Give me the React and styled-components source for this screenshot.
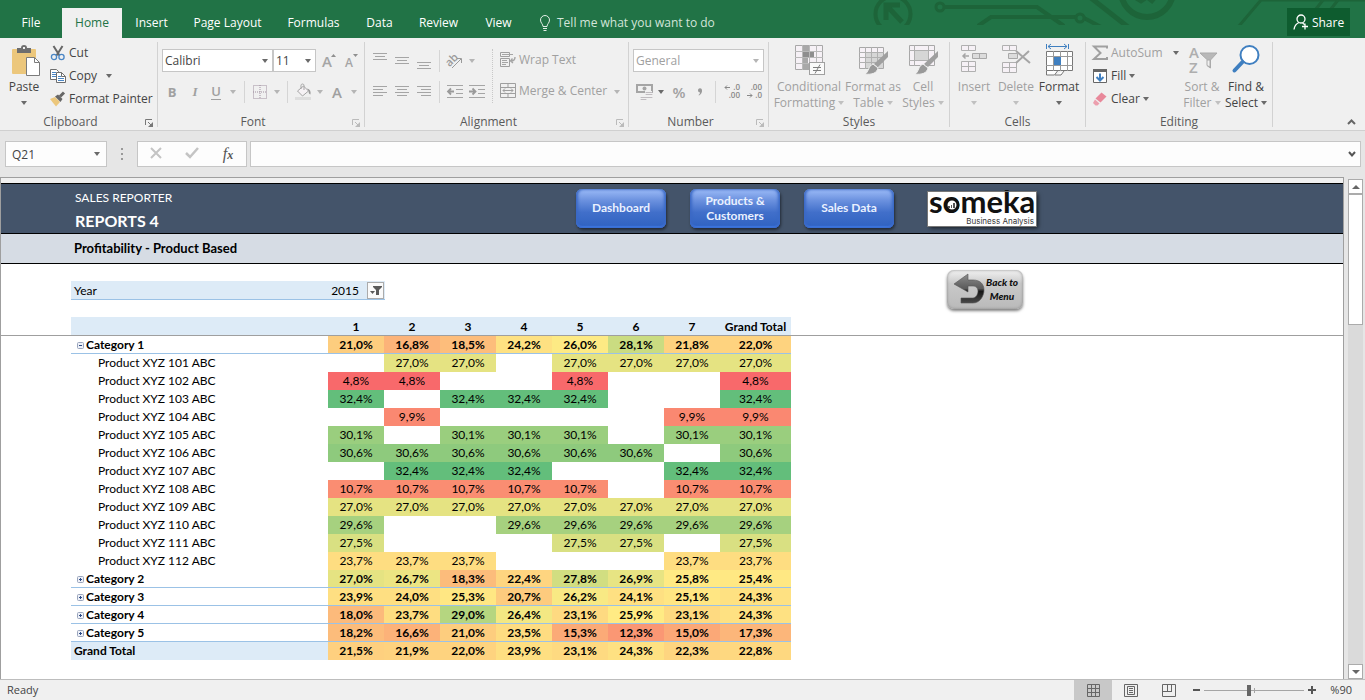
import React from "react";
import { useState } from "react";
import styled, { createGlobalStyle } from "styled-components";

const GlobalStyle = createGlobalStyle`
    *{
        box-sizing: border-box;
    }
    body{
        margin: 0;
        background: #f0f0f0;
        font-family: "Open Sans", "Noto Sans", sans-serif;
        font-size: 12px;
        color: #444;
    }
    button, input, select{
        font-family: inherit;
        font-size: inherit;
        color: inherit;
        margin: 0;
        padding: 0;
        border: none;
        background: none;
        border-radius: 0;
    }
    svg{
        overflow: visible;
    }
`;

/* ---------- data ---------- */

const tabs = [
    { name: 'File', width: 62 },
    { name: 'Home', width: 60, active: true },
    { name: 'Insert', width: 59 },
    { name: 'Page Layout', width: 93 },
    { name: 'Formulas', width: 79 },
    { name: 'Data', width: 53 },
    { name: 'Review', width: 65 },
    { name: 'View', width: 55 },
];

const columns = ['1', '2', '3', '4', '5', '6', '7', 'Grand Total'];

const rows = [
    { name: 'Category 1', type: 'category', open: true, values: ['21,0', '16,8', '18,5', '24,2', '26,0', '28,1', '21,8', '22,0'] },
    { name: 'Product XYZ 101 ABC', values: ['', '27,0', '27,0', '', '27,0', '27,0', '27,0', '27,0'] },
    { name: 'Product XYZ 102 ABC', values: ['4,8', '4,8', '', '', '4,8', '', '', '4,8'] },
    { name: 'Product XYZ 103 ABC', values: ['32,4', '', '32,4', '32,4', '32,4', '', '', '32,4'] },
    { name: 'Product XYZ 104 ABC', values: ['', '9,9', '', '', '', '', '9,9', '9,9'] },
    { name: 'Product XYZ 105 ABC', values: ['30,1', '', '30,1', '30,1', '30,1', '', '30,1', '30,1'] },
    { name: 'Product XYZ 106 ABC', values: ['30,6', '30,6', '30,6', '30,6', '30,6', '30,6', '', '30,6'] },
    { name: 'Product XYZ 107 ABC', values: ['', '32,4', '32,4', '32,4', '', '', '32,4', '32,4'] },
    { name: 'Product XYZ 108 ABC', values: ['10,7', '10,7', '10,7', '10,7', '10,7', '', '10,7', '10,7'] },
    { name: 'Product XYZ 109 ABC', values: ['27,0', '27,0', '27,0', '27,0', '27,0', '27,0', '27,0', '27,0'] },
    { name: 'Product XYZ 110 ABC', values: ['29,6', '', '', '29,6', '29,6', '29,6', '29,6', '29,6'] },
    { name: 'Product XYZ 111 ABC', values: ['27,5', '', '', '', '27,5', '27,5', '', '27,5'] },
    { name: 'Product XYZ 112 ABC', values: ['23,7', '23,7', '23,7', '', '', '', '23,7', '23,7'] },
    { name: 'Category 2', type: 'category', values: ['27,0', '26,7', '18,3', '22,4', '27,8', '26,9', '25,8', '25,4'] },
    { name: 'Category 3', type: 'category', values: ['23,9', '24,0', '25,3', '20,7', '26,2', '24,1', '25,1', '24,3'] },
    { name: 'Category 4', type: 'category', values: ['18,0', '23,7', '29,0', '26,4', '23,1', '25,9', '23,1', '24,3'] },
    { name: 'Category 5', type: 'category', values: ['18,2', '16,6', '21,0', '23,5', '15,3', '12,3', '15,0', '17,3'] },
    { name: 'Grand Total', type: 'total', values: ['21,5', '21,9', '22,0', '23,9', '23,1', '24,3', '22,3', '22,8'] },
];

// red - yellow - green scale, like the conditional formatting one
const red = [248, 105, 107];
const yellow = [255, 235, 132];
const green = [99, 190, 123];
const mix = (a, b, t) => `rgb(${a.map((c, i) => Math.round(c + (b[i] - c) * t)).join(',')})`;
const heat = (text) => {
    if (!text) return 'transparent';
    const v = parseFloat(text.replace(',', '.'));
    const mid = 25.9;
    return v <= mid ? mix(red, yellow, (v - 4.8) / (mid - 4.8)) : mix(yellow, green, (v - mid) / (32.4 - mid));
};

/* ---------- icons ---------- */

const Icon = ({ w = 16, h = 16, children }) => (
    <svg width={w} height={h} viewBox={`0 0 ${w} ${h}`} fill="none" aria-hidden="true">{children}</svg>
);

const Caret = ({ color = '#6a6a6a' }) => (
    <Icon w={6} h={4}><path d="M0 0h6L3 4z" fill={color} /></Icon>
);

const Lines = ({ bars, w = 16, h = 16 }) => (
    <Icon w={w} h={h}>
        {bars.map(([x, y, len]) => <rect key={`${x}-${y}`} x={x} y={y} width={len} height="1" fill="#a5a5a5" />)}
    </Icon>
);

const PasteIcon = () => (
    <Icon w={34} h={32}>
        <g transform="translate(4 0)">
            <rect x="1" y="5" width="24" height="25" rx="1" fill="#ecc77c" />
            <path d="M6 9V4h4c0-2 1-3 3-3s3 1 3 3h4v5z" fill="#6e6e6e" />
            <rect x="12" y="3" width="2" height="2" fill="#f0f0f0" />
            <path d="M15.500 13.500h8l5 5v13h-13z" fill="#fff" stroke="#7b7b7b" />
            <path d="M23.500 13.500v5h5" stroke="#7b7b7b" />
        </g>
    </Icon>
);

const CutIcon = () => (
    <Icon>
        <path d="M3.500 1l6 9.500M12.500 1l-6 9.500" stroke="#666" strokeWidth="2" />
        <circle cx="4" cy="12" r="2.600" stroke="#4a86c5" strokeWidth="1.300" />
        <circle cx="11.500" cy="12" r="2.600" stroke="#4a86c5" strokeWidth="1.300" />
    </Icon>
);

const CopyIcon = () => (
    <Icon>
        <path d="M.5 1.500h6l2 2v8h-8z" fill="#fff" stroke="#6e6e6e" />
        <path d="M2 4.500h4M2 6.500h4M2 8.500h4" stroke="#4a86c5" />
        <path d="M6.500 4.500h5l4 4v6h-9z" fill="#fff" stroke="#6e6e6e" />
        <path d="M11.500 4.500v4h4" stroke="#6e6e6e" />
        <path d="M8 8.500h3M8 10.500h6M8 12.500h6" stroke="#4a86c5" />
    </Icon>
);

const PainterIcon = () => (
    <Icon>
        <path d="M0 8l5-2 5 5-4 4.500z" fill="#ecc77c" />
        <path d="M5 5.500l3-2 4.500 4.500-2 3z" fill="#666" />
        <path d="M10 5.500l4-4" stroke="#666" strokeWidth="3" />
    </Icon>
);

const GrowIcon = ({ down }) => (
    <Icon w={16} h={20}>
        <text x="2" y="16" fontSize={down ? 12 : 15} fontWeight="600" fill="#a5a5a5">A</text>
        <path d={down ? 'M10 3h5l-2.500 3z' : 'M11 6h5l-2.500-3z'} fill="#8f8f8f" />
    </Icon>
);

const BordersIcon = () => (
    <Icon w={14} h={14}>
        <path d="M.5.5h13v13H.5zM7 0v14M0 7h14" stroke="#a090a0" strokeDasharray="1 1" />
    </Icon>
);

const BucketIcon = () => (
    <Icon w={17} h={17}>
        <path d="M2.500 8l6-5 5 5-6 5z" fill="#f6f2f5" stroke="#a5a5a5" />
        <path d="M6 6V2.500C6 .5 9 .5 9 2.500V7" stroke="#a5a5a5" />
        <path d="M12 5.500c3 .5 4 2.500 3.500 6-1.500-.5-2-2-2-3.500z" fill="#999" />
        <rect x="0" y="14" width="16" height="3" fill="#dedede" />
    </Icon>
);

const CommaIcon = () => (
    <Icon w={6} h={8}>
        <path d="M1 2.500A2 2 0 015 2c.3 2.500-1 4.500-3 5.500L1.500 7C2.500 6.300 3 5.500 3 4.500 2 4.500 1 3.500 1 2.500z" fill="#999" />
    </Icon>
);

const AngleIcon = () => (
    <Icon w={20} h={20}>
        <text x="1" y="12" fontSize="11" fontWeight="600" fill="#9a9a9a" transform="rotate(-45 8 10)">ab</text>
        <path d="M7 17l9-9M12 7.500h4.500V12" stroke="#9a9a9a" />
    </Icon>
);

const IndentIcon = ({ right }) => (
    <Icon>
        <path d="M0 1.500h16M9 5.500h7M9 9.500h7M0 13.500h16" stroke="#a5a5a5" />
        <path d={right ? 'M0 7.500h6M3.500 4.500l3 3-3 3' : 'M7 7.500H1M4 4.500l-3 3 3 3'} stroke="#9a9a9a" strokeWidth="1.800" />
    </Icon>
);

const WrapIcon = () => (
    <Icon>
        <path d="M.5.500h9v4h-9zM.5 6.500h9v8h-9z" stroke="#9f9f9f" />
        <path d="M2 2.500h11M2 8.500h5M2 10.500h6M2 12.500h4" stroke="#a5a5a5" />
        <path d="M15 5c0 3-1 4-4 4M12.500 6.500L10.500 9l2.500 2" stroke="#a5a5a5" strokeWidth="1.400" />
    </Icon>
);

const MergeIcon = () => (
    <Icon>
        <path d="M.5.500h15v14H.5zM0 4.500h16M0 10.500h16M8 0v4M8 11v4" stroke="#9f9f9f" />
        <path d="M3 7.500h10M5 5.500l-2 2 2 2M11 5.500l2 2-2 2" stroke="#9f9f9f" />
    </Icon>
);

const MoneyIcon = () => (
    <Icon w={17}>
        <path d="M1 1h15v7H1z" stroke="#a5a5a5" strokeWidth="2" />
        <circle cx="8.500" cy="4.500" r="2" fill="#a5a5a5" />
        <path d="M9 7h7v9H4v-3h5z" fill="#f0f0f0" />
        <path d="M10 8.500h6M10 10.500h6M5 13.500h5M10 13.500h6M5 15.500h5" stroke="#c0bcc0" strokeLinecap="round" />
    </Icon>
);

const DecimalIcon = ({ less }) => (
    <Icon w={18} h={20}>
        <text x="17" y="8" textAnchor="end" fontSize="8" fontWeight="600" fill="#888">{less ? '.00' : '.0'}</text>
        <text x="17" y="16" textAnchor="end" fontSize="8" fontWeight="600" fill="#888">{less ? '.0' : '.00'}</text>
        <path d={less ? 'M2 13.500h5M5 11.500l2 2-2 2' : 'M7 5.500H2M4 3.500l-2 2 2 2'} stroke="#888" />
    </Icon>
);

const CondIcon = () => (
    <Icon w={31} h={32}>
        <path d="M1.500 1.500h27v24h-27z" fill="#f6f1f6" stroke="#a8a8a8" />
        <path d="M9 2h6v5H9zM9 13h5v6H9zM9 19h7v6H9z" fill="#a8a8a8" />
        <path d="M9 8h11v5H9z" fill="#8e8e8e" />
        <path d="M1 7.500h28M1 13.500h28M1 19.500h28M8.500 1v25M15.500 1v25M22.500 1v25" stroke="#b9b9b9" />
        <rect x="15.500" y="18.500" width="15" height="12" fill="#fafafa" stroke="#a0a0a0" />
        <path d="M19 23.500h8M19 26.500h8M26 20.500l-5 9" stroke="#7e7e7e" />
    </Icon>
);

const Brush = () => (
    <>
        <path d="M30 7v6L20 23l-4-3z" fill="#9f9f9f" />
        <path d="M15 20l5 4c-1 5-6 7-13 6 4-2 3-8 8-10z" fill="#999" stroke="#f0f0f0" />
    </>
);

const TableIcon = () => (
    <Icon w={31} h={32}>
        <path d="M1.500 3.500h24v21h-24z" fill="#f6f1f6" stroke="#a8a8a8" />
        <path d="M8 9h17v15H8z" fill="#d6d6d6" />
        <path d="M1 8.500h25M1 13.500h25M1 18.500h25M7.500 3v22M13.500 3v22M19.500 3v22" stroke="#b0b0b0" />
        <Brush />
    </Icon>
);

const CellIcon = () => (
    <Icon w={31} h={32}>
        <path d="M1.500 1.500h25v20h-25z" fill="#f6f1f6" stroke="#a8a8a8" />
        <path d="M1 6.500h26M1 16.500h26M6.500 1v21M20.500 1v21" stroke="#b0b0b0" />
        <rect x="7" y="7" width="13" height="9" fill="#d6d6d6" />
        <Brush />
    </Icon>
);

const InsertIcon = () => (
    <Icon w={28} h={32}>
        <path d="M1.500 1.500h14v5h-14zM8.500 1.500v5M1.500 17.500h14v10h-14zM1.500 22.500h14M8.500 17.500v10" fill="#f6f1f6" stroke="#b0b0b0" />
        <path d="M12.500 9.500h14v5h-14zM19.500 9.500v5" fill="#dcdcdc" stroke="#a8a8a8" />
        <path d="M9 12H3M5.500 9.500L3 12l2.500 2.500" stroke="#a5a5a5" strokeWidth="1.500" />
    </Icon>
);

const DeleteIcon = () => (
    <Icon w={30} h={32}>
        <path d="M1.500 1.500h14v5h-14zM8.500 1.500v5M1.500 18.500h14v10h-14zM1.500 23.500h14M8.500 18.500v10" fill="#f6f1f6" stroke="#b0b0b0" />
        <path d="M7.500 9.500h9v5h-9z" fill="#dcdcdc" stroke="#a8a8a8" />
        <path d="M15 7l14 12M28 7L15 19" stroke="#a5a5a5" strokeWidth="2" />
    </Icon>
);

const FormatIcon = () => (
    <Icon w={29} h={32}>
        <path d="M1.500 0v5M23.500 0v5M3 2.500h19M6 0L3 2.500 6 5M19 0l3 2.500L19 5" stroke="#3f7fc0" />
        <path d="M1.500 7.500h26v19h-26z" fill="#fff" stroke="#777" />
        <path d="M1 12.500h27M1 21.500h27M8.500 7v20M15.500 7v20M22.500 7v20" stroke="#9a9a9a" />
        <rect x="9" y="13" width="7" height="8" fill="#3f7fc0" />
        <path d="M1.500 27v4h8l3-4M10 31h6l3-4" fill="#fff" stroke="#777" />
    </Icon>
);

const SigmaIcon = () => (
    <Icon>
        <path d="M15 3.500V1.500H2l6.500 6.500L2 14h13v-2" stroke="#a0a0a0" strokeWidth="2" />
    </Icon>
);

const FillIcon = () => (
    <Icon>
        <path d="M1.500 1.500h13v13h-13z" fill="#fff" stroke="#666" />
        <path d="M1 1h14v3H1z" fill="#666" />
        <path d="M8 5.500v7M4.500 9L8 12.500 11.500 9" stroke="#3f7fc0" strokeWidth="2" />
    </Icon>
);

const EraserIcon = () => (
    <Icon>
        <path d="M9.500 1.500l5 4-6 6-5-4z" fill="#e8889a" />
        <path d="M3 8.500l4.500 4-2 2H3.500L1 12z" fill="#ec9fae" />
    </Icon>
);

const SortIcon = () => (
    <Icon w={31} h={32}>
        <text x="2" y="14" fontSize="15" fontWeight="600" fill="#aeaeae">A</text>
        <text x="2" y="29" fontSize="15" fontWeight="600" fill="#aeaeae">Z</text>
        <path d="M13 9h17l-6.500 7v8l-3-2v-6z" fill="#b8b8b8" stroke="#aaa" />
        <path d="M20 16h3v7l-3-1.500z" fill="#f0f0f0" stroke="#aaa" />
    </Icon>
);

const FindIcon = () => (
    <Icon w={30} h={32}>
        <circle cx="18.500" cy="11" r="9" fill="#fff" stroke="#3f7fc0" strokeWidth="2" />
        <path d="M11.500 18l-8 8.500" stroke="#3f7fc0" strokeWidth="4" strokeLinecap="round" />
    </Icon>
);

const LauncherIcon = ({ color }) => (
    <Icon w={8} h={8}>
        <path d="M.5 6V.5H7M3 3l3.500 3.500" stroke={color} />
        <path d="M8 3v5H3z" fill={color} />
    </Icon>
);

const BulbIcon = () => (
    <Icon w={12}>
        <path d="M4 11.500c0-2.500-2.500-3.500-2.500-6.500a4.500 4.500 0 019 0c0 3-2.500 4-2.500 6.500zM4 13.500h4M4.500 15.500h3" stroke="#e4efe8" />
    </Icon>
);

const ShareIcon = () => (
    <Icon w={16}>
        <circle cx="8" cy="5" r="4" stroke="#fff" strokeWidth="1.300" />
        <path d="M1 15.500C1.500 12 3.500 9.500 6 8.500M9.500 9l2 1.500M12 9.500v6M9 12.500h6" stroke="#fff" strokeWidth="1.300" />
    </Icon>
);

const FilterIcon = () => (
    <Icon w={14} h={14}>
        <path d="M4 3h9v1l-3 3v5H7V7L4 4z" fill="#5a5a5a" />
        <path d="M1 8h5L3.500 11z" fill="#5a5a5a" />
    </Icon>
);

const ToggleIcon = ({ open }) => (
    <Icon w={7} h={7}>
        <rect x=".5" y=".5" width="6" height="6" rx="1" fill="#eef1f8" stroke="#9aa5bd" />
        <path d={open ? 'M2 3.500h3' : 'M2 3.500h3M3.500 2v3'} stroke="#2c4a86" />
    </Icon>
);

const BackIcon = () => (
    <Icon w={34} h={32}>
        <defs>
            <linearGradient id="arrow" x1="0" y1="0" x2="0" y2="1">
                <stop offset="0" stopColor="#8d8d8d" />
                <stop offset=".5" stopColor="#5b5b5b" />
                <stop offset=".6" stopColor="#161616" />
                <stop offset="1" stopColor="#4a4a4a" />
            </linearGradient>
        </defs>
        <path d="M2 11L16 1v6h5c7 0 11 4 11 10s-4 13-11 13H9v-5h12c3 0 5-4 5-7s-2-5-5-5h-5v6z" fill="url(#arrow)" stroke="#555" strokeWidth=".6" />
    </Icon>
);

const Circuit = () => (
    <svg width="495" height="25" viewBox="870 0 495 25" fill="none" stroke="#1d6439" strokeWidth="3" aria-hidden="true">
        <circle cx="893" cy="14" r="17.500" strokeWidth="4" />
        <path d="M886 20V5h14M887 6l15 16" strokeWidth="5" />
        <circle cx="940" cy="7" r="4" />
        <path d="M944 7h93l27 19M978 26l13-9h85M1084 18l17 9" strokeWidth="4" />
        <circle cx="1080" cy="18" r="4" />
        <path d="M1091-2l37 29" strokeWidth="5" />
        <circle cx="1147" cy="-9" r="26" strokeWidth="6" />
        <path d="M1136-1l5 3 6-4 5 4 5-6" />
        <path d="M1239 26l22-26h104" />
        <path d="M1316 9l7-9M1331 9l7-9" />
    </svg>
);

const Logo = () => (
    <svg width="108" height="34" viewBox="0 0 108 34" role="img" aria-label="someka Business Analysis">
        <rect width="108" height="34" fill="#fff" />
        <text x="1" y="21" fontFamily="Lato" fontWeight="700" fontSize="31" fill="#111">someka</text>
        <circle cx="24" cy="13" r="6" fill="#fff" stroke="#111" strokeWidth="3" />
        <path d="M20 16v-2h2v2zM23 16v-3h1v3zM25 16v-5h2v5z" fill="#555" />
        <text x="106" y="32" textAnchor="end" fontFamily="Inter" fontSize="8" fill="#333">Business Analysis</text>
    </svg>
);

/* ---------- page ---------- */

function Tool({ w, label, children }){
    return <ToolButton $w={w} aria-label={label}>{children}</ToolButton>
}

function Drop({ w = 12, label, dark }){
    return <Tool w={w} label={label}><Caret color={dark ? '#6a6a6a' : '#b5b5b5'} /></Tool>
}

function Big({ w, icon, lines, off }){
    return(
        <BigButton $w={w} $off={off}>
            {icon}
            <span>{lines[0]}</span>
            <span>{lines[1]} <Caret color={off ? '#c0c0c0' : '#6a6a6a'} /></span>
        </BigButton>
    )
}

function Picker({ label, value, w, off }){
    return(
        <PickerStyled $w={w} $off={off}>
            <select aria-label={label} defaultValue={value}>
                <option>{value}</option>
            </select>
            <Caret color={off ? '#b5b5b5' : '#6a6a6a'} />
        </PickerStyled>
    )
}

function Group({ name, w, launcher, children }){
    return(
        <GroupStyled $w={w} $launcher={launcher}>
            <div className="content">{children}</div>
            <div className="footer">
                <span>{name}</span>
                {launcher && <button aria-label={`${name} settings`}><LauncherIcon color={launcher} /></button>}
            </div>
        </GroupStyled>
    )
}

function Ribbon(){
    return(
        <RibbonStyled>
            <Group name="Clipboard" w={158} launcher="#777">
                <Big w={48} icon={<PasteIcon />} lines={['Paste', '']} />
                <Stack>
                    <SmallButton><CutIcon />Cut</SmallButton>
                    <SmallButton $gap={6}><CopyIcon />Copy<Caret /></SmallButton>
                    <SmallButton><PainterIcon />Format Painter</SmallButton>
                </Stack>
            </Group>
            <Group name="Font" w={207} launcher="#bbb">
                <Rows>
                    <Row $pad={4}>
                        <Picker label="Font" value="Calibri" w={111} />
                        <Picker label="Font size" value="11" w={43} />
                        <Tool w={24} label="Increase font size"><GrowIcon /></Tool>
                        <Tool w={22} label="Decrease font size"><GrowIcon down /></Tool>
                    </Row>
                    <Row $pad={2}>
                        <Tool w={24} label="Bold"><Letter $bold>B</Letter></Tool>
                        <Tool w={22} label="Italic"><Letter $serif>I</Letter></Tool>
                        <Tool w={20} label="Underline"><Letter $under>U</Letter></Tool>
                        <Drop w={14} label="Underline style" />
                        <Divider />
                        <Tool w={22} label="Borders"><BordersIcon /></Tool>
                        <Drop label="Border style" />
                        <Divider />
                        <Tool w={22} label="Fill color"><BucketIcon /></Tool>
                        <Drop label="Fill colors" />
                        <Tool w={22} label="Font color"><Letter $big>A</Letter></Tool>
                        <Drop label="Font colors" />
                    </Row>
                </Rows>
            </Group>
            <Group name="Alignment" w={264} launcher="#bbb">
                <Rows>
                    <Row $pad={4}>
                        <Tool w={22} label="Top align"><Lines w={14} bars={[[0, 0, 14], [2, 3, 10], [0, 6, 14]]} /></Tool>
                        <Tool w={22} label="Middle align"><Lines w={14} bars={[[0, 4, 14], [2, 7, 10], [0, 10, 14]]} /></Tool>
                        <Tool w={22} label="Bottom align"><Lines w={14} bars={[[0, 9, 14], [2, 12, 10], [0, 15, 14]]} /></Tool>
                        <Divider />
                        <Tool w={22} label="Orientation"><AngleIcon /></Tool>
                        <Drop label="Orientations" />
                    </Row>
                    <Row $pad={4}>
                        <Tool w={22} label="Align left"><Lines w={14} h={12} bars={[[0, 0, 14], [0, 3, 10], [0, 6, 14], [0, 9, 10]]} /></Tool>
                        <Tool w={22} label="Center"><Lines w={14} h={12} bars={[[0, 0, 14], [2, 3, 10], [0, 6, 14], [2, 9, 10]]} /></Tool>
                        <Tool w={22} label="Align right"><Lines w={14} h={12} bars={[[0, 0, 14], [4, 3, 10], [0, 6, 14], [4, 9, 10]]} /></Tool>
                        <Divider />
                        <Tool w={22} label="Decrease indent"><IndentIcon /></Tool>
                        <Tool w={22} label="Increase indent"><IndentIcon right /></Tool>
                    </Row>
                </Rows>
                <DottedLine />
                <Rows>
                    <Row><SmallButton $off><WrapIcon />Wrap Text</SmallButton></Row>
                    <Row><SmallButton $off><MergeIcon />Merge &amp; Center</SmallButton><Drop w={20} label="Merge options" /></Row>
                </Rows>
            </Group>
            <Group name="Number" w={140} launcher="#bbb">
                <Rows>
                    <Row $pad={4}>
                        <Picker label="Number format" value="General" w={131} off />
                    </Row>
                    <Row $pad={4}>
                        <Tool w={22} label="Accounting format"><MoneyIcon /></Tool>
                        <Drop label="Currencies" dark />
                        <Tool w={24} label="Percent style"><Letter $big>%</Letter></Tool>
                        <Tool w={18} label="Comma style"><CommaIcon /></Tool>
                        <Divider $w={12} />
                        <Tool w={22} label="Increase decimal"><DecimalIcon /></Tool>
                        <Tool w={22} label="Decrease decimal"><DecimalIcon less /></Tool>
                    </Row>
                </Rows>
            </Group>
            <Group name="Styles" w={181}>
                <Pad />
                <Big w={72} off icon={<CondIcon />} lines={['Conditional', 'Formatting']} />
                <Big w={56} off icon={<TableIcon />} lines={['Format as', 'Table']} />
                <Big w={44} off icon={<CellIcon />} lines={['Cell', 'Styles']} />
            </Group>
            <Group name="Cells" w={136}>
                <Pad />
                <Big w={40} off icon={<InsertIcon />} lines={['Insert', '']} />
                <Big w={44} off icon={<DeleteIcon />} lines={['Delete', '']} />
                <Big w={42} icon={<FormatIcon />} lines={['Format', '']} />
            </Group>
            <Group name="Editing" w={187}>
                <Pad />
                <Stack $w={90}>
                    <SmallButton $off $gap={7}><SigmaIcon />AutoSum<Caret /></SmallButton>
                    <SmallButton><FillIcon />Fill<Caret /></SmallButton>
                    <SmallButton><EraserIcon />Clear<Caret /></SmallButton>
                </Stack>
                <Big w={44} off icon={<SortIcon />} lines={['Sort &', 'Filter']} />
                <Big w={44} icon={<FindIcon />} lines={['Find &', 'Select']} />
            </Group>
            <Collapse aria-label="Collapse the ribbon">
                <Icon w={9} h={6}><path d="M1 5l3.500-3.500L8 5" stroke="#666" strokeWidth="2" /></Icon>
            </Collapse>
        </RibbonStyled>
    )
}

function FormulaBar(){
    const [formula, setFormula] = useState('');
    return(
        <FormulaStyled>
            <NameBox>
                <input aria-label="Name box" defaultValue="Q21" />
                <Caret />
            </NameBox>
            <Dots><Icon w={3} h={12}><path d="M0 1h2M0 6h2M0 11h2" stroke="#999" strokeWidth="2" /></Icon></Dots>
            <FxBox>
                <button aria-label="Cancel"><Icon w={12} h={12}><path d="M1 1l10 10M11 1L1 11" stroke="#c4c4c4" strokeWidth="2" /></Icon></button>
                <button aria-label="Enter"><Icon w={14} h={12}><path d="M1 6l4 4 8-9" stroke="#c4c4c4" strokeWidth="2.500" /></Icon></button>
                <button aria-label="Insert function"><i>f</i><i className="x">x</i></button>
            </FxBox>
            <FormulaInput>
                <input aria-label="Formula" value={formula} onChange={(e) => setFormula(e.target.value)} />
                <Icon w={8} h={6}><path d="M1 1l3 3.500L7 1" stroke="#555" strokeWidth="2" /></Icon>
            </FormulaInput>
        </FormulaStyled>
    )
}

function Report(){
    return(
        <Sheet>
            <Banner>
                <div className="titles">
                    <p>SALES REPORTER</p>
                    <h1>REPORTS 4</h1>
                </div>
                <NavButton>Dashboard</NavButton>
                <NavButton>Products &amp; Customers</NavButton>
                <NavButton>Sales Data</NavButton>
                <LogoBox><Logo /></LogoBox>
            </Banner>
            <Subtitle>Profitability - Product Based</Subtitle>
            <Controls>
                <YearFilter>
                    <span>Year</span>
                    <span>2015</span>
                    <button aria-label="Filter year"><FilterIcon /></button>
                </YearFilter>
                <BackButton>
                    <BackIcon />
                    <span>Back to<br />Menu</span>
                </BackButton>
            </Controls>
            <Pivot>
                <colgroup>
                    <col width="70" />
                    <col width="257" />
                    {columns.map((c, i) => <col key={c} width={i < 7 ? 56 : 71} />)}
                    <col />
                </colgroup>
                <thead>
                    <tr>
                        <td />
                        <th />
                        {columns.map((c) => <th key={c} scope="col">{c}</th>)}
                        <td />
                    </tr>
                </thead>
                <tbody>
                    {rows.map((row) => (
                        <PivotRow key={row.name} $type={row.type}>
                            <td />
                            <th scope="row">
                                {row.type === 'category' && <button aria-label={`Toggle ${row.name}`}><ToggleIcon open={row.open} /></button>}
                                {row.name}
                            </th>
                            {row.values.map((v, i) => <ValueCell key={i} $bg={heat(v)}>{v && `${v}%`}</ValueCell>)}
                            <td />
                        </PivotRow>
                    ))}
                </tbody>
            </Pivot>
        </Sheet>
    )
}

function App(){
    const [zoom, setZoom] = useState(45);
    return(
        <Window>
            <GlobalStyle />
            <TitleBar>
                <div className="art"><Circuit /></div>
                {tabs.map((t) => <Tab key={t.name} $w={t.width} $active={t.active}>{t.name}</Tab>)}
                <TellMe><BulbIcon />Tell me what you want to do</TellMe>
                <Share><ShareIcon />Share</Share>
            </TitleBar>
            <Ribbon />
            <FormulaBar />
            <Workspace>
                <Report />
                <ScrollBar>
                    <button aria-label="Scroll up"><Icon w={8} h={4}><path d="M0 4h8L4 0z" fill="#666" /></Icon></button>
                    <div className="thumb" />
                    <div className="track" />
                    <button aria-label="Scroll down"><Icon w={8} h={4}><path d="M0 0h8L4 4z" fill="#666" /></Icon></button>
                </ScrollBar>
            </Workspace>
            <StatusBar>
                <span className="ready">Ready</span>
                <ViewButton $active aria-label="Normal view">
                    <Icon w={13} h={13}><path d="M.5.5h12v12H.5zM4.500 0v13M8.500 0v13M0 4.500h13M0 8.500h13" stroke="#666" /></Icon>
                </ViewButton>
                <ViewButton aria-label="Page layout view">
                    <Icon w={14} h={13}><path d="M.5.5h13v12H.5zM3.500 2.500h7v8h-7zM5 4.500h4M5 6.500h4M5 8.500h4" stroke="#666" /></Icon>
                </ViewButton>
                <ViewButton aria-label="Page break view">
                    <Icon w={14} h={13}><path d="M.5.5h13v12H.5zM5.500 0v7.500M9.500 0v7.500M0 7.500h10" stroke="#666" /></Icon>
                </ViewButton>
                <ZoomButton aria-label="Zoom out"><Icon w={7} h={8}><path d="M0 4h7" stroke="#555" strokeWidth="2" /></Icon></ZoomButton>
                <Slider type="range" aria-label="Zoom" value={zoom} onChange={(e) => setZoom(e.target.value)} />
                <ZoomButton aria-label="Zoom in"><Icon w={8} h={8}><path d="M0 4h8M4 0v8" stroke="#555" strokeWidth="2" /></Icon></ZoomButton>
                <span className="percent">%90</span>
            </StatusBar>
        </Window>
    )
}

/* ---------- styles ---------- */

const Window = styled.div`
    display: flex;
    flex-direction: column;
    min-height: 100vh;
`;

const TitleBar = styled.header`
    position: relative;
    display: flex;
    align-items: flex-end;
    height: 38px;
    padding-right: 15px;
    background: #217346;
    color: #fff;
    .art{
        position: absolute;
        top: 0;
        right: 0;
        height: 25px;
        overflow: hidden;
    }
`;

const Tab = styled.button`
    width: ${p => p.$w}px;
    height: 30px;
    padding-bottom: 1px;
    color: ${p => p.$active ? '#217346' : '#fff'};
    background: ${p => p.$active ? '#f0f0f0' : 'transparent'};
`;

const TellMe = styled.button`
    display: flex;
    align-items: center;
    gap: 6px;
    height: 30px;
    padding: 0 0 1px 13px;
    color: #d3e5da;
`;

const Share = styled.button`
    position: relative;
    display: flex;
    align-items: center;
    justify-content: center;
    gap: 3px;
    width: 63px;
    height: 28px;
    margin: 0 0 2px auto;
    background: #0e5c2f;
    color: #fff;
`;

const RibbonStyled = styled.div`
    display: flex;
    height: 93px;
    background: #f0f0f0;
    border-bottom: 1px solid #d0d0d0;
`;

const GroupStyled = styled.section`
    display: flex;
    flex-direction: column;
    flex: none;
    width: ${p => p.$w}px;
    margin: 4px 0 3px;
    border-right: 1px solid #d2d2d2;
    .content{
        display: flex;
        flex: none;
        height: 72px;
    }
    .footer{
        position: relative;
        flex: none;
        line-height: 16px;
        text-align: center;
        padding-right: ${p => p.$launcher ? 16 : 0}px;
        color: #5a5a5a;
    }
    .footer button{
        position: absolute;
        right: 4px;
        bottom: 3px;
        line-height: 0;
    }
`;

const Pad = styled.span`
    width: 4px;
`;

const Stack = styled.div`
    display: flex;
    flex-direction: column;
    width: ${p => p.$w ? `${p.$w}px` : 'auto'};
`;

const SmallButton = styled.button`
    display: flex;
    align-items: center;
    gap: 3px;
    height: 23px;
    padding: 0 0 2px 2px;
    white-space: nowrap;
    color: ${p => p.$off ? '#a0a0a0' : '#444'};
    svg:last-child:not(:first-child){
        margin-left: ${p => p.$gap || 0}px;
    }
`;

const BigButton = styled.button`
    display: flex;
    flex-direction: column;
    align-items: center;
    width: ${p => p.$w}px;
    padding-top: 2px;
    line-height: 16px;
    white-space: nowrap;
    color: ${p => p.$off ? '#a0a0a0' : '#444'};
    > svg{
        margin-bottom: 3px;
    }
    span{
        height: 16px;
    }
    span svg{
        vertical-align: 2px;
    }
`;

const Rows = styled.div`
    display: flex;
    flex-direction: column;
    padding-top: 3px;
`;

const Row = styled.div`
    display: flex;
    align-items: center;
    height: 31px;
    padding-left: ${p => p.$pad || 0}px;
`;

const ToolButton = styled.button`
    display: flex;
    align-items: center;
    justify-content: center;
    flex: none;
    width: ${p => p.$w}px;
    height: 22px;
`;

const Letter = styled.span`
    font-family: ${p => p.$serif ? '"Liberation Serif", serif' : 'inherit'};
    font-style: ${p => p.$serif ? 'italic' : 'normal'};
    font-weight: ${p => p.$bold ? 700 : 600};
    font-size: ${p => p.$big ? 15 : 13}px;
    line-height: 16px;
    border-bottom: ${p => p.$under ? '1px solid #a0a0a0' : 'none'};
    color: #a0a0a0;
`;

const Divider = styled.span`
    width: ${p => p.$w || 9}px;
    height: 22px;
    background: linear-gradient(#d5d5d5, #d5d5d5) center / 1px 100% no-repeat;
`;

const DottedLine = styled.span`
    width: 1px;
    height: 54px;
    margin: 7px 5px 0 4px;
    border-left: 1px dotted #c8c8c8;
`;

const PickerStyled = styled.span`
    display: flex;
    align-items: center;
    flex: none;
    width: ${p => p.$w}px;
    height: 23px;
    padding-right: 4px;
    border: 1px solid #c6c6c6;
    background: #fff;
    color: ${p => p.$off ? '#a0a0a0' : '#444'};
    select{
        flex: 1;
        min-width: 0;
        appearance: none;
        padding-left: 2px;
    }
`;

const Collapse = styled.button`
    align-self: flex-end;
    margin: 0 9px 5px auto;
    line-height: 0;
`;

const FormulaStyled = styled.div`
    display: flex;
    height: 46px;
    padding: 10px 4px 10px 5px;
    background: #e6e6e6;
`;

const Box = styled.div`
    display: flex;
    align-items: center;
    border: 1px solid #c6c6c6;
    background: #fdfdfd;
    input{
        flex: 1;
        min-width: 0;
        outline: none;
    }
`;

const NameBox = styled(Box)`
    width: 102px;
    padding: 0 6px;
`;

const Dots = styled.span`
    display: flex;
    align-items: center;
    justify-content: center;
    width: 30px;
`;

const FxBox = styled(Box)`
    width: 110px;
    margin-right: 3px;
    button{
        flex: 1;
        font-family: "Liberation Serif", serif;
        font-size: 16px;
        line-height: 16px;
        color: #555;
    }
    .x{
        font-size: 12px;
        font-weight: 700;
    }
`;

const FormulaInput = styled(Box)`
    flex: 1;
    padding: 0 4px;
`;

const Workspace = styled.div`
    display: flex;
    flex: 1;
    background: #e6e6e6;
`;

const Sheet = styled.main`
    flex: 1;
    padding-top: 5px;
    border: 1px solid #9f9f9f;
    border-bottom: none;
    background: linear-gradient(#f0f0f0, #f0f0f0) top / 100% 5px no-repeat #fff;
    font-family: Lato, "Noto Sans", sans-serif;
    color: #000;
`;

const Banner = styled.div`
    display: flex;
    align-items: center;
    gap: 24px;
    height: 51px;
    padding-left: 74px;
    border-top: 1px solid #000;
    border-bottom: 1px solid #000;
    background: #44546a;
    color: #fff;
    .titles{
        width: 477px;
        padding-top: 5px;
    }
    p{
        margin: 0;
        font-size: 12px;
        line-height: 20px;
    }
    h1{
        margin: 0;
        font-size: 16px;
        line-height: 26px;
    }
`;

const NavButton = styled.button`
    width: 90px;
    height: 39px;
    padding: 0 10px 2px;
    border-radius: 6px;
    font-size: 12px;
    font-weight: 700;
    line-height: 15px;
    color: #eaf1ff;
    background: linear-gradient(#9dbcf8, #6a90de 30%, #416fca 60%, #2f62c0);
    box-shadow: 1px 2px 3px rgba(0, 0, 0, 0.5), inset 2px 0 3px #3a68c4, inset -2px 0 3px #3a69c6, inset 0 -2px 1px #3f7ae6;
`;

const LogoBox = styled.div`
    margin-left: 10px;
    line-height: 0;
    outline: 1px solid #777;
    box-shadow: 2px 2px 4px rgba(0, 0, 0, 0.7);
`;

const Subtitle = styled.h2`
    height: 30px;
    margin: 0;
    padding-left: 73px;
    border-bottom: 1px solid #000;
    background: #d6dce4;
    font-size: 13px;
    line-height: 28px;
`;

const Controls = styled.div`
    display: flex;
    align-items: flex-start;
    gap: 562px;
    height: 53px;
    padding: 6px 0 0 70px;
`;

const YearFilter = styled.div`
    display: flex;
    align-items: center;
    flex: none;
    width: 314px;
    height: 19px;
    margin-top: 11px;
    padding-left: 3px;
    border-bottom: 1px solid #9bc2e6;
    background: #ddebf7;
    font-size: 12px;
    span:first-child{
        flex: 1;
    }
    button{
        width: 17px;
        height: 17px;
        margin: 0 1px 0 8px;
        border: 1px solid #ababab;
        background: #fafafa;
        line-height: 0;
    }
`;

const BackButton = styled.button`
    display: flex;
    align-items: center;
    width: 76px;
    height: 39px;
    padding: 0 3px 2px 5px;
    border-radius: 7px;
    font-size: 10px;
    font-style: italic;
    font-weight: 900;
    line-height: 14px;
    white-space: nowrap;
    color: #111;
    background: linear-gradient(#f2f2f2, #c9c9c9 35%, #bababa);
    box-shadow: 0 2px 3px rgba(0, 0, 0, 0.5), inset 0 0 3px #888;
    svg{
        flex: none;
    }
`;

const Pivot = styled.table`
    width: 100%;
    table-layout: fixed;
    border-spacing: 0;
    font-size: 12px;
    line-height: 17px;
    th, td{
        height: 18px;
        padding: 0;
        text-align: center;
        white-space: nowrap;
    }
    thead th, thead td{
        height: 19px;
        border-bottom: 1px solid #9f9f9f;
    }
    thead th{
        background: #ddebf7;
    }
    tbody th, tbody td{
        vertical-align: top;
    }
    tbody th{
        text-align: left;
    }
`;

const PivotRow = styled.tr`
    font-weight: ${p => p.$type ? 700 : 400};
    th{
        font-weight: inherit;
        padding-left: ${p => p.$type === 'category' ? 6 : p.$type === 'total' ? 3 : 27}px;
        background: ${p => p.$type === 'total' ? '#ddebf7' : 'none'};
    }
    th, td:not(:first-child):not(:last-child){
        border-bottom: ${p => p.$type === 'category' ? '1px solid #9bc2e6' : 'none'};
    }
    button{
        margin-right: 2px;
        line-height: 0;
    }
`;

const ValueCell = styled.td`
    background: ${p => p.$bg};
`;

const ScrollBar = styled.div`
    display: flex;
    flex-direction: column;
    width: 21px;
    padding: 2px 2px 0 4px;
    button{
        height: 15px;
        border: 1px solid #ababab;
        background: #fff;
        line-height: 0;
    }
    .thumb{
        height: 131px;
        border: 1px solid #ababab;
        background: #fff;
    }
    .track{
        flex: 1;
        background: #dadada;
    }
`;

const StatusBar = styled.footer`
    display: flex;
    align-items: center;
    height: 21px;
    padding: 0 13px 0 7px;
    border-top: 1px solid #bdbdbd;
    background: #f0f0f0;
    .ready{
        flex: 1;
        font-size: 11px;
        line-height: 20px;
    }
    .percent{
        width: 32px;
        text-align: right;
        font-size: 11px;
        line-height: 20px;
    }
`;

const ViewButton = styled.button`
    width: 38px;
    height: 20px;
    line-height: 0;
    background: ${p => p.$active ? '#c8c8c8' : 'none'};
`;

const ZoomButton = styled.button`
    width: 16px;
    line-height: 0;
`;

const Slider = styled.input`
    appearance: none;
    width: 100px;
    height: 12px;
    outline: none;
    background:
        linear-gradient(#a5a5a5, #a5a5a5) center / 100% 1px no-repeat,
        linear-gradient(#a5a5a5, #a5a5a5) center / 1px 5px no-repeat;
    &::-webkit-slider-thumb{
        appearance: none;
        width: 4px;
        height: 11px;
        background: #666;
    }
`;

export default App
